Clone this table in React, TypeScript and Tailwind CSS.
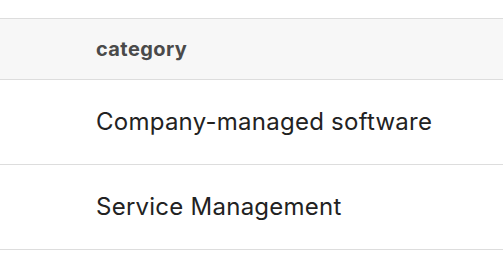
export default function App() {
  const rows = ["Company-managed software", "Service Management"];
  return (
    <div className="w-[503px] h-[265px] bg-white pt-[18px] font-['Inter',sans-serif]">
      <div className="border-t border-[#dddddd]">
        <div className="h-[61px] bg-[#f7f7f7] border-b border-[#dddddd] flex items-center pl-[96px]">
          <span className="text-[20px] font-bold tracking-[0.4px] text-[#4a4a4a]">category</span>
        </div>
        {rows.map((r) => (
          <div key={r} className="h-[85px] border-b border-[#dddddd] flex items-center pl-[96px]">
            <span className="text-[24px] tracking-[0.25px] text-[#222222]">{r}</span>
          </div>
        ))}
      </div>
    </div>
  );
}
